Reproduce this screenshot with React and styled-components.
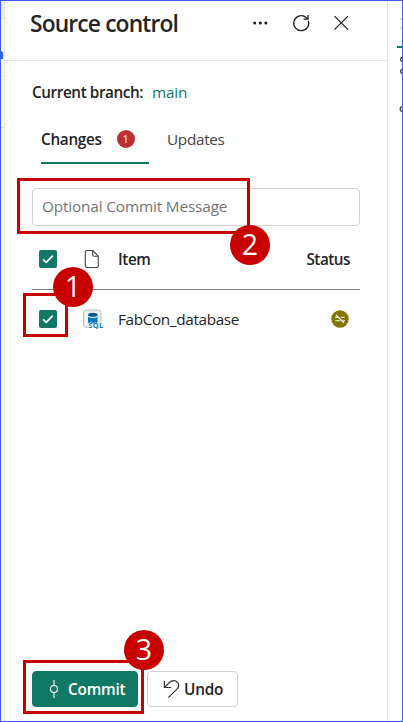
import React from "react";
import styled, { createGlobalStyle } from "styled-components";

const GlobalStyle = createGlobalStyle`
  * { box-sizing: border-box; }
  body { margin: 0; background: #fff; font-family: "Segoe UI", "Open Sans", "Noto Sans", sans-serif; color: #242424; overflow: hidden; }
  button { font: inherit; color: inherit; }
  svg { display: block; flex: none; }
`;

const Frame = styled.div`
  position: relative;
  width: 403px;
  height: 722px;
  border: 1px solid #3f5cff;
  display: grid;
  grid-template-columns: 3px 384px 1fr;
  overflow: hidden;
`;

const LeftEdge = styled.aside`
  display: flex;
  flex-direction: column;
  overflow: hidden;
`;

const EdgeCell = styled.div`
  flex: none;
  height: ${(p) => p.$h}px;
  background: ${(p) => p.$bg || "#fff"};
  border-bottom: 1px solid #e6e6e6;
  display: flex;
  justify-content: flex-end;
  align-items: center;
`;

const CutLetter = styled.span`
  color: #17507f;
  font-size: 15px;
  font-weight: 600;
  line-height: 10px;
  padding-top: 10px;
`;

const Panel = styled.main`
  border-left: 1px solid #e0e0e0;
  border-right: 1px solid #e0e0e0;
  display: flex;
  flex-direction: column;
`;

const Header = styled.header`
  height: 60px;
  flex: none;
  border-bottom: 1px solid #e6e6e6;
  padding: 0 36px 16px 25px;
  display: flex;
  align-items: center;
  justify-content: space-between;
`;

const Label = styled.span`
  display: block;
  font-size: ${(p) => p.$size || 15.3}px;
  font-weight: ${(p) => p.$weight || 400};
  letter-spacing: ${(p) => p.$track || 0}px;
  color: ${(p) => p.$color || "inherit"};
  line-height: 22px;
  white-space: nowrap;
`;

const Title = styled.h1`
  margin: 2px 0 0;
  font-size: 22.8px;
  font-weight: 600;
  letter-spacing: -0.86px;
  line-height: 32px;
  white-space: nowrap;
`;

const Actions = styled.div`
  display: flex;
  align-items: center;
  gap: 20px;
`;

const IconButton = styled.button`
  border: 0;
  padding: 0;
  background: none;
  width: 20px;
  height: 20px;
`;

const Content = styled.div`
  flex: 1;
  padding: 20px 27px 14px;
  display: flex;
  flex-direction: column;
`;

const Branch = styled.div`
  display: flex;
  height: 22px;
  gap: 9px;
`;

const Tabs = styled.nav`
  display: flex;
  margin-top: 19px;
  padding-left: 9px;
  height: 42px;
  gap: 18px;
`;

const Tab = styled.div`
  display: flex;
  align-items: center;
  gap: 15px;
  height: 42px;
  width: ${(p) => (p.$active ? "108px" : "auto")};
  padding-bottom: 6px;
  border-bottom: 2px solid ${(p) => (p.$active ? "#117865" : "transparent")};
`;

const Count = styled.span`
  width: 18px;
  height: 18px;
  border-radius: 50%;
  background: #bc2f32;
  color: #fff;
  font-size: 11px;
  line-height: 18px;
  text-align: center;
`;

const MessageInput = styled.input`
  width: 328px;
  height: 38px;
  margin-top: 24px;
  flex: none;
  border: 1px solid #d1d1d1;
  border-radius: 4px;
  padding: 0 9px 2px;
  font-family: inherit;
  font-size: 15.3px;
  letter-spacing: -0.13px;
  background: #fff;
  &::placeholder { color: #757575; opacity: 1; }
`;

const Row = styled.div`
  display: grid;
  grid-template-columns: 18px 20px 1fr auto;
  column-gap: 25px;
  align-items: center;
  padding: ${(p) => (p.$head ? 2 : 0)}px ${(p) => (p.$head ? 10 : 11)}px 0 7px;
  height: ${(p) => (p.$head ? 64 : 57)}px;
  border-bottom: ${(p) => (p.$head ? "1px solid #808080" : "0")};
`;

const NameCell = styled.div`
  margin-left: -9px;
`;

const Checkbox = styled.span`
  width: 18px;
  height: 18px;
  border-radius: 2px;
  background: #117865;
`;

const Footer = styled.footer`
  margin-top: auto;
  display: flex;
  gap: 9px;
`;

const Button = styled.button`
  display: flex;
  align-items: center;
  height: 36px;
  width: ${(p) => (p.$primary ? 106 : 91)}px;
  padding: 0 0 0 ${(p) => (p.$primary ? 14 : 13)}px;
  gap: ${(p) => (p.$primary ? 7 : 3)}px;
  border: 1px solid ${(p) => (p.$primary ? "#117865" : "#d1d1d1")};
  border-radius: 4px;
  background: ${(p) => (p.$primary ? "#117865" : "#fff")};
  color: ${(p) => (p.$primary ? "#fff" : "#242424")};
`;

const RightEdge = styled.aside`
  overflow: hidden;
`;

const Outline = styled.div`
  position: absolute;
  left: ${(p) => p.$x - 1}px;
  top: ${(p) => p.$y - 1}px;
  width: ${(p) => p.$w}px;
  height: ${(p) => p.$h}px;
  border: 3px solid #c80000;
`;

const Step = styled.div`
  position: absolute;
  left: ${(p) => p.$x - 1}px;
  top: ${(p) => p.$y - 1}px;
  width: 40px;
  height: 40px;
  border-radius: 50%;
  background: #c80000;
  color: #fff;
  font-size: 28.5px;
  line-height: 39px;
  text-align: center;
`;

const Checked = () => (
  <Checkbox role="checkbox" aria-checked="true">
    <svg width="18" height="18" viewBox="0 0 18 18" fill="none" stroke="#fff" strokeWidth="1.7" strokeLinecap="round" strokeLinejoin="round">
      <path d="M4.6 9.8 7.2 12.4 13.3 6.2" />
    </svg>
  </Checkbox>
);

const MoreIcon = () => (
  <svg width="20" height="20" viewBox="0 0 20 20" fill="#1c1c1c">
    <circle cx="3.7" cy="10" r="1.5" /><circle cx="9.3" cy="10" r="1.5" /><circle cx="14.8" cy="10" r="1.5" />
  </svg>
);

const RefreshIcon = () => (
  <svg width="20" height="20" viewBox="0 0 20 20" fill="none" stroke="#1c1c1c" strokeWidth="1.25">
    <path d="M17.3 7.7A7.5 7.5 0 1 1 13.8 3.6L16.8 6.1" />
    <path d="M17 2V6.2H12.6" />
  </svg>
);

const CloseIcon = () => (
  <svg width="20" height="20" viewBox="0 0 20 20" fill="none" stroke="#1c1c1c" strokeWidth="1.2">
    <path d="M3.5 3.2 17 16.7M17 3.2 3.5 16.7" />
  </svg>
);

const DocumentIcon = () => (
  <svg width="20" height="20" viewBox="0 0 20 20" fill="none" stroke="#424242" strokeWidth="1.1" strokeLinejoin="round">
    <path d="M5 1.5H10.6L16.3 7.2V16.8A1.7 1.7 0 0 1 14.6 18.5H5A1.7 1.7 0 0 1 3.3 16.8V3.2A1.7 1.7 0 0 1 5 1.5Z" />
    <path d="M10.6 1.5V5.7A1.5 1.5 0 0 0 12.1 7.2H16.3" />
  </svg>
);

const SqlIcon = () => (
  <svg width="22" height="20" viewBox="0 0 22 20">
    <rect x="1.5" y="1" width="17.5" height="17.5" rx="2.5" fill="#e8e8e9" stroke="#bfc1c3" />
    <path d="M3 3H17.5L3 17Z" fill="#f5f5f5" />
    <path d="M6 6V13.2C6 14.2 8.1 15 10.8 15S15.5 14.2 15.5 13.2V6Z" fill="#0878bd" />
    <ellipse cx="10.8" cy="5.6" rx="4.7" ry="1.8" fill="#15577f" />
    <path d="M6 6.7Q10.8 9.3 15.5 6.7V8Q10.8 10.2 6 8Z" fill="#ddf0f9" />
    <text x="6.2" y="19.4" fontFamily="Open Sans, sans-serif" fontSize="7.3" fontWeight="700" fill="#0878bd" stroke="#fff" strokeWidth="1" paintOrder="stroke" textLength="14.8">SQL</text>
  </svg>
);

const StatusIcon = () => (
  <svg width="18" height="18" viewBox="0 0 18 18" fill="none" stroke="#fff" strokeWidth="1.1">
    <circle cx="9" cy="9" r="8.7" fill="#827500" stroke="none" />
    <path d="M4 7.2H8.1M10 7.2H13.7M4.3 10.7H9.2M11.8 10.7H14M5 5 13 12.8" />
  </svg>
);

const CommitIcon = () => (
  <svg width="14" height="20" viewBox="0 0 14 20" fill="none" stroke="#fff" strokeWidth="1.1">
    <circle cx="7" cy="10" r="3.5" /><path d="M7 1V6.5M7 13.5V19" />
  </svg>
);

const UndoIcon = () => (
  <svg width="20" height="20" viewBox="0 0 20 20" fill="none" stroke="#303030" strokeWidth="1.15">
    <path d="M3.4 1.8V8.5H10.1M3.5 8.3 8.4 3.5C11.2 .8 15.1 1.3 16.8 3.7C18.2 5.8 17.7 8.4 15.9 10.2L7.3 18.7" />
  </svg>
);

const EdgeIcons = () => (
  <svg width="14" height="130" viewBox="0 0 14 130">
    <path d="M12.5 18H14M12.5 27H14" stroke="#5bb09e" />
    <path d="M9 46H14" stroke="#117865" strokeWidth="2" />
    <g fill="none" stroke="#454545" strokeWidth="1.4">
      <circle cx="14.6" cy="58.5" r="2" /><circle cx="14.6" cy="70.5" r="2" /><circle cx="14.6" cy="108.2" r="2.4" />
    </g>
  </svg>
);

export default function App() {
  return (
    <>
      <GlobalStyle />
      <Frame>
        <LeftEdge>
          <EdgeCell $h={18} $bg="#f0f0f0" />
          <EdgeCell $h={58}><CutLetter>n</CutLetter></EdgeCell>
          <EdgeCell $h={51} />
        </LeftEdge>
        <Panel>
          <Header>
            <Title>Source control</Title>
            <Actions>
              <IconButton aria-label="More"><MoreIcon /></IconButton>
              <IconButton aria-label="Refresh"><RefreshIcon /></IconButton>
              <IconButton aria-label="Close"><CloseIcon /></IconButton>
            </Actions>
          </Header>
          <Content>
            <Branch>
              <Label $weight={600} $track={-0.42}>Current branch:</Label>
              <Label $track={-0.2} $color="#117865">main</Label>
            </Branch>
            <Tabs>
              <Tab $active><Label $weight={600} $track={-0.3}>Changes</Label><Count>1</Count></Tab>
              <Tab><Label $track={-0.3} $color="#424242">Updates</Label></Tab>
            </Tabs>
            <MessageInput placeholder="Optional Commit Message" />
            <Row $head>
              <Checked />
              <DocumentIcon />
              <NameCell><Label $weight={600} $track={-0.4}>Item</Label></NameCell>
              <Label $weight={600} $track={-0.5}>Status</Label>
            </Row>
            <Row>
              <Checked />
              <SqlIcon />
              <NameCell><Label $track={-0.35}>FabCon_database</Label></NameCell>
              <StatusIcon />
            </Row>
            <Footer>
              <Button $primary><CommitIcon /><Label $weight={600} $track={-0.2}>Commit</Label></Button>
              <Button><UndoIcon /><Label $weight={600} $track={-0.2}>Undo</Label></Button>
            </Footer>
          </Content>
        </Panel>
        <RightEdge><EdgeIcons /></RightEdge>
        <Outline $x={17} $y={178} $w={233} $h={56} />
        <Outline $x={23} $y={293} $w={45} $h={44} />
        <Outline $x={23} $y={660} $w={121} $h={54} />
        <Step $x={53} $y={267}>1</Step>
        <Step $x={230} $y={225}>2</Step>
        <Step $x={124} $y={630}>3</Step>
      </Frame>
    </>
  );
}
